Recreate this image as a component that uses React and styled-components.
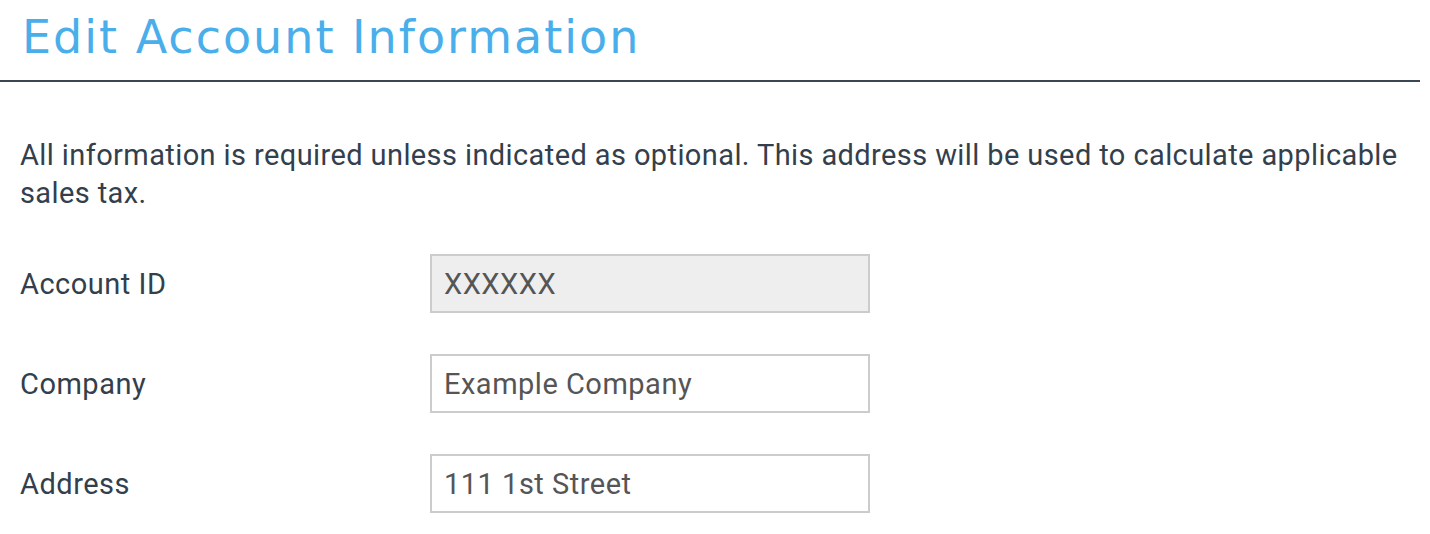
import React from 'react'
import styled, { createGlobalStyle } from 'styled-components'

const GlobalStyle = createGlobalStyle`
	body {
		margin: 0;
		background: #fff;
		font-family: Roboto, 'Liberation Sans', sans-serif;
		letter-spacing: 0.5px;
	}
`

const fields = [
	{ label: 'Account ID', value: 'XXXXXX', disabled: true },
	{ label: 'Company', value: 'Example Company' },
	{ label: 'Address', value: '111 1st Street' },
]

const App = () => {
	return (
		<>
			<GlobalStyle />
			<Page>
				<Header>
					<Title>Edit Account Information</Title>
				</Header>
				<Body>
					<Intro>
						All information is required unless indicated as optional. This address will be used to calculate
						applicable sales tax.
					</Intro>
					<Form>
						{fields.map((field) => (
							<Row key={field.label}>
								<Label>{field.label}</Label>
								<Input defaultValue={field.value} disabled={field.disabled} />
							</Row>
						))}
					</Form>
				</Body>
			</Page>
		</>
	)
}

const Page = styled.div`
	width: 1420px;
`

const Header = styled.div`
	border-bottom: 2px solid #3a4654;
	padding: 7px 0 0 22px;
	height: 82px;
	box-sizing: border-box;
`

const Title = styled.h1`
	margin: 0;
	font-family: 'DejaVu Sans', sans-serif;
	font-weight: 400;
	font-size: 46px;
	letter-spacing: 2px;
	line-height: 60px;
	color: #4aaeea;
`

const Body = styled.div`
	padding: 54px 0 0 20px;
`

const Intro = styled.p`
	margin: 0;
	font-size: 29px;
	line-height: 38px;
	letter-spacing: 0.4px;
	color: #333f4c;
`

const Form = styled.div`
	display: flex;
	flex-direction: column;
	gap: 41px;
	margin-top: 42px;
`

const Row = styled.div`
	display: flex;
	align-items: center;
`

const Label = styled.label`
	width: 410px;
	font-size: 29px;
	color: #333f4c;
`

const Input = styled.input`
	width: 440px;
	height: 59px;
	box-sizing: border-box;
	border: 2px solid #cccccc;
	padding: 0 12px;
	font-family: Roboto, 'Liberation Sans', sans-serif;
	font-size: 29px;
	letter-spacing: 0.5px;
	color: #555555;
	background: ${(p) => (p.disabled ? '#eeeeee' : '#fff')};
	outline: none;
	&:disabled {
		color: #555555;
	}
`

export default App
